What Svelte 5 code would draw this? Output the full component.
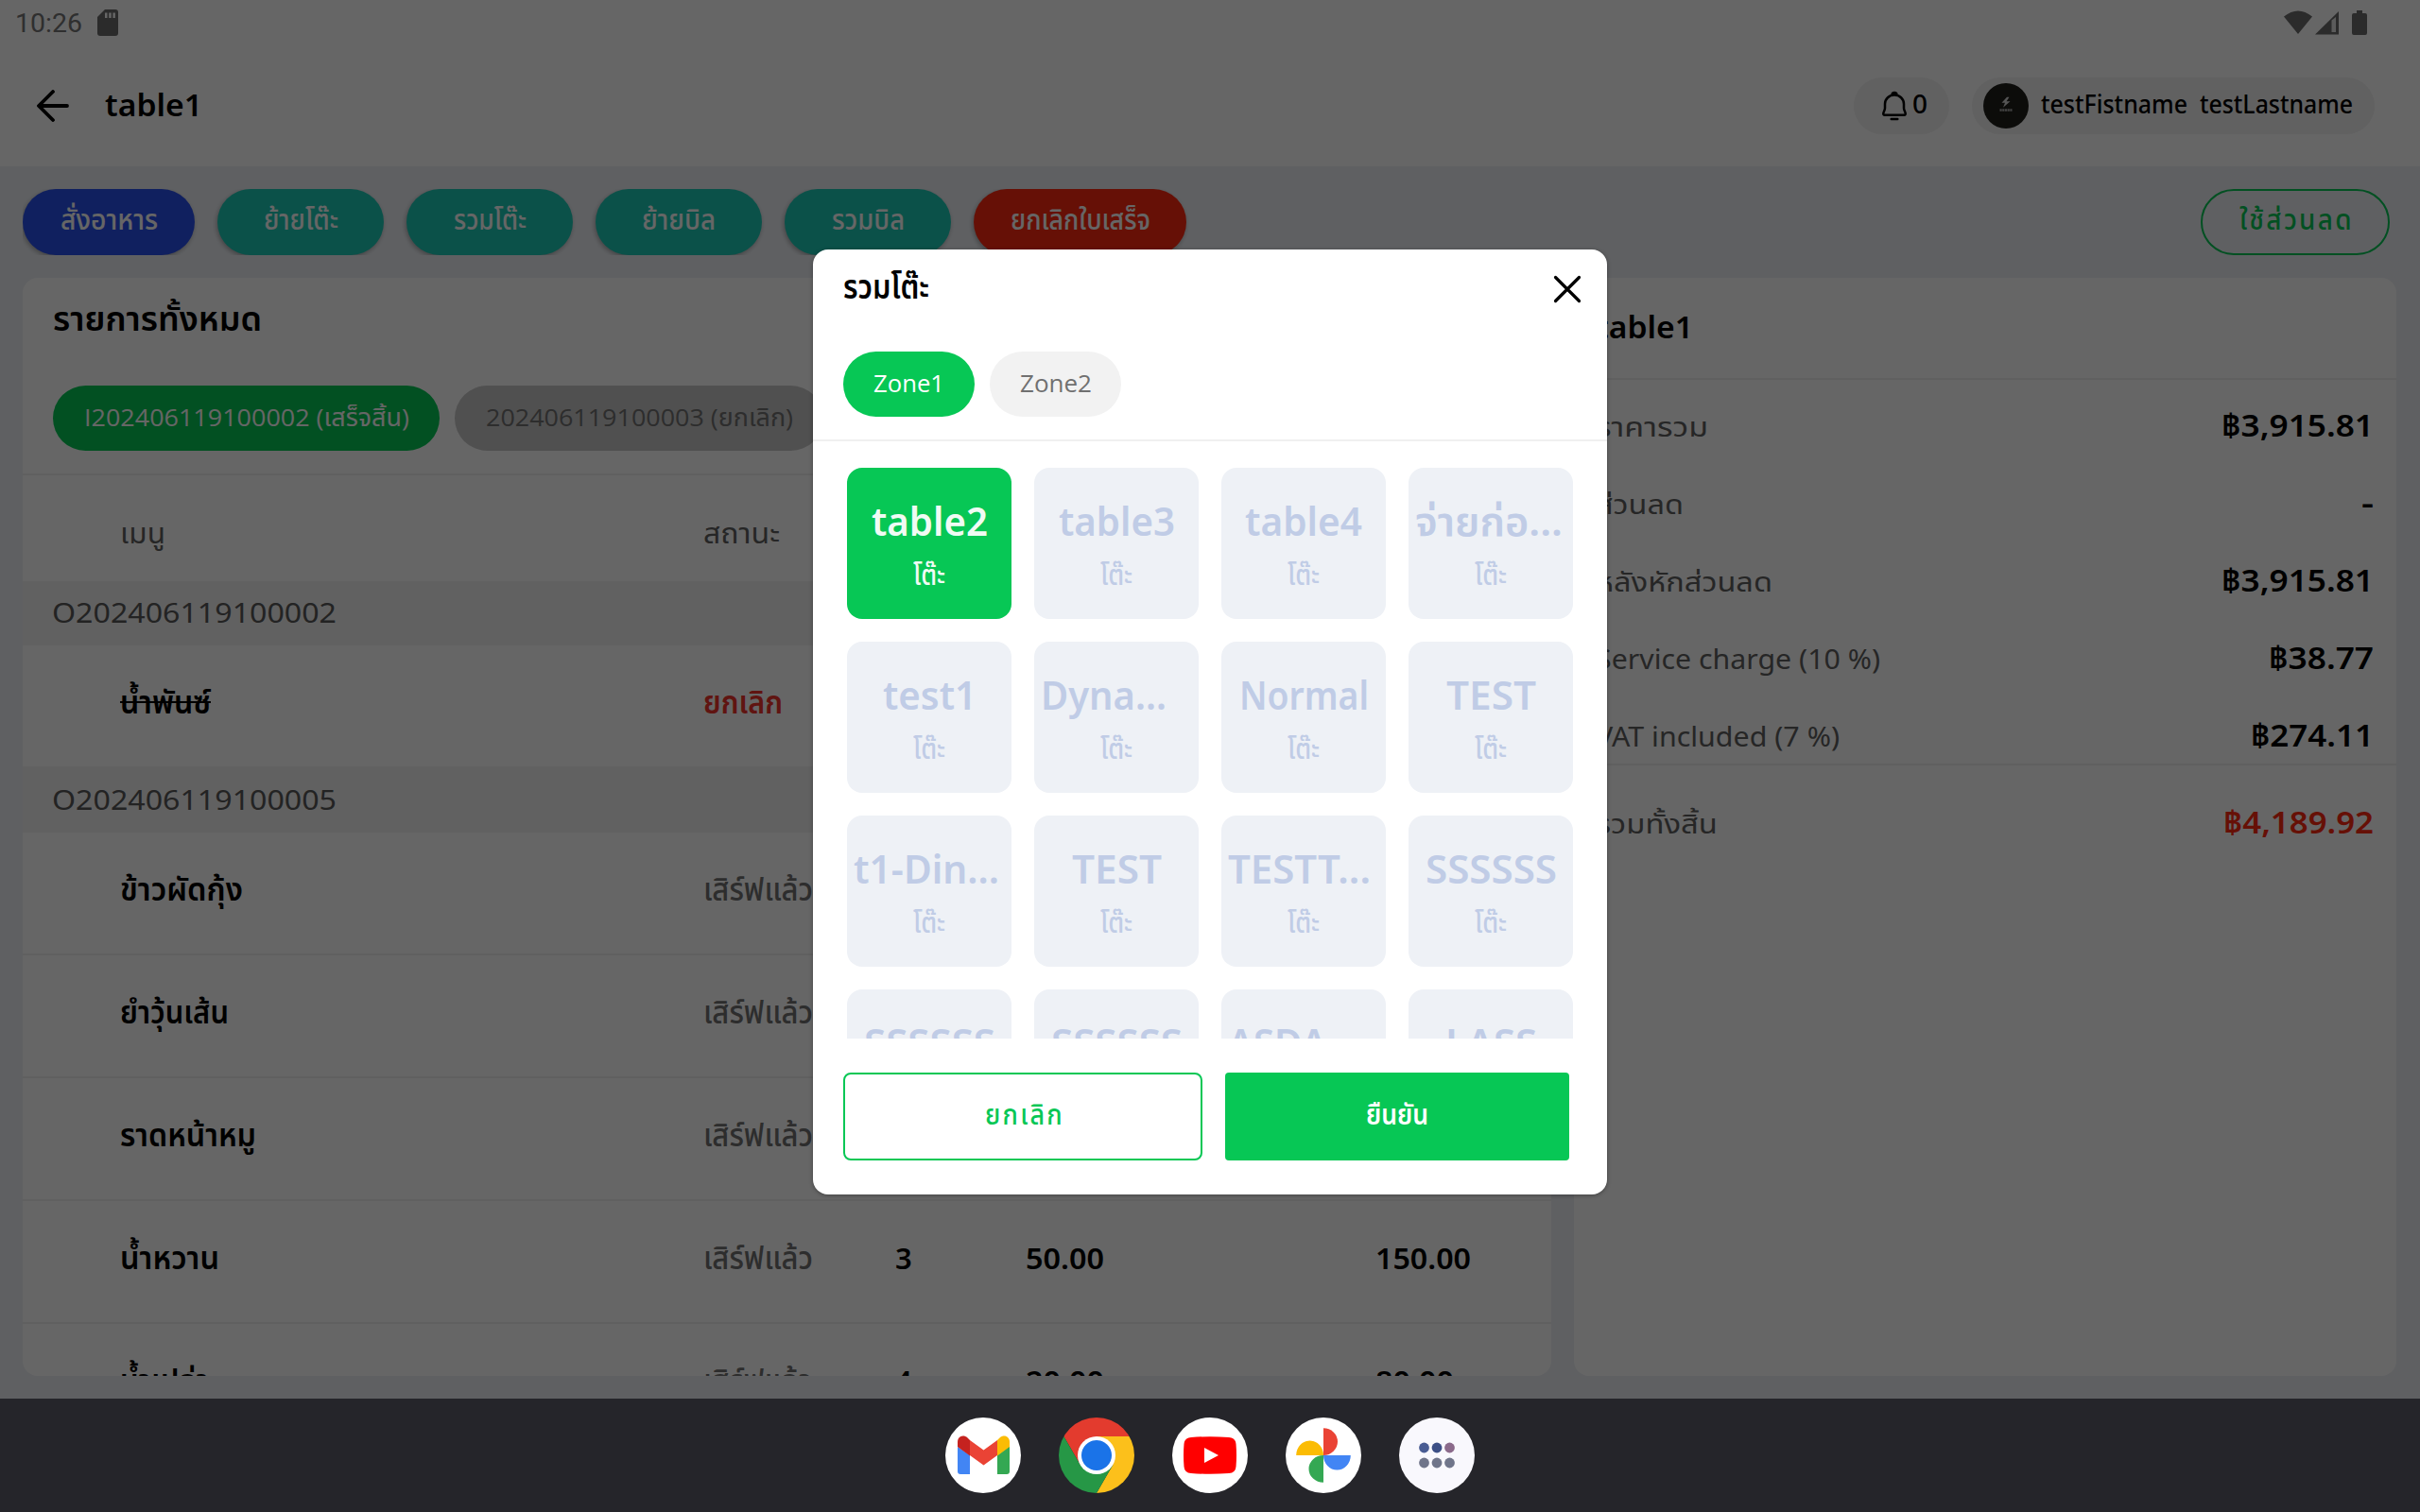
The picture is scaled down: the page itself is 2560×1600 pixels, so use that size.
<script>
  const actions = [
    { label: 'สั่งอาหาร', tone: 'blue', box: 182, w: 101 },
    { label: 'ย้ายโต๊ะ', tone: 'teal', box: 176, w: 77 },
    { label: 'รวมโต๊ะ', tone: 'teal', box: 176, w: 75 },
    { label: 'ย้ายบิล', tone: 'teal', box: 176, w: 76 },
    { label: 'รวมบิล', tone: 'teal', box: 176, w: 75 },
    { label: 'ยกเลิกใบเสร็จ', tone: 'red', box: 225, w: 146 },
  ];

  const served = [
    { name: 'ข้าวผัดกุ้ง', w: 128 },
    { name: 'ยำวุ้นเส้น', w: 113 },
    { name: 'ราดหน้าหมู', w: 142 },
    { name: 'น้ำหวาน', w: 103, qty: '3', price: '50.00', total: '150.00' },
    { name: 'น้ำเปล่า', w: 92, qty: '4', price: '20.00', total: '80.00' },
  ];

  const summary = [
    { label: 'ราคารวม', w: 117, amount: '฿3,915.81', aw: 159 },
    { label: 'ส่วนลด', w: 91, amount: '-', aw: 11 },
    { label: 'หลังหักส่วนลด', w: 185, amount: '฿3,915.81', aw: 159 },
    { label: 'Service charge (10 %)', w: 299, amount: '฿38.77', aw: 109 },
    { label: 'VAT included (7 %)', w: 256, amount: '฿274.11', aw: 128 },
  ];

  const tables = [
    { name: 'table2', w: 121, active: true },
    { name: 'table3', w: 121 },
    { name: 'table4', w: 122 },
    { name: 'จ่ายก่อ...', w: 154, cut: true },
    { name: 'test1', w: 97 },
    { name: 'Dyna...', w: 131, cut: true },
    { name: 'Normal', w: 135 },
    { name: 'TEST', w: 93 },
    { name: 't1-Din...', w: 152, cut: true },
    { name: 'TEST', w: 93 },
    { name: 'TESTT...', w: 149, cut: true },
    { name: 'SSSSSS', w: 137 },
    { name: 'SSSSSS', w: 137 },
    { name: 'SSSSSS', w: 137 },
    { name: 'ASDA ...', w: 146, cut: true },
    { name: 'LASS', w: 95 },
  ];

  // Condenses or widens a label so that its ink occupies the given width,
  // with a pixel of side bearing hanging out at both ends.
  function fit(node, width) {
    const natural = node.getBoundingClientRect().width;
    if (!natural) return;
    const target = width + 2;
    node.style.transform = `scaleX(${target / natural})`;
    node.style.marginRight = `${target - natural - 1}px`;
  }
</script>

<div class="screen">
  <div class="app">
    <div class="status">
      <span class="fit clock" use:fit={69}>10:26</span>
      <svg class="sd" viewBox="0 0 22 28"><path d="M8 0h11a3 3 0 0 1 3 3v22a3 3 0 0 1-3 3H3a3 3 0 0 1-3-3V8z" fill="#6b6b6b" /><path d="M8 3.500h2.500v5.500H8zM12.200 3.500h2.500v5.500h-2.500zM16.400 3.500h2.500v5.500h-2.500z" fill="#fff" /></svg>
      <span class="spacer"></span>
      <svg class="signals" viewBox="0 0 90 28">
        <path d="M0 7.500Q15-4.500 30 7.500L15 26z" fill="#6b6b6b" />
        <path d="M58 2v24.500H33z" fill="#6b6b6b" /><path d="M50.500 11.500L55 8v16h-4.500z" fill="#e4e4e4" />
        <path d="M77 1h6v3h3a2 2 0 0 1 2 2v19a2 2 0 0 1-2 2H74a2 2 0 0 1-2-2V6a2 2 0 0 1 2-2h3z" fill="#6b6b6b" />
      </svg>
    </div>

    <header>
      <svg class="back" viewBox="0 0 34 34" fill="none" stroke="#000" stroke-width="3.800" stroke-linecap="round" stroke-linejoin="round"><path d="M17 2L2 17l15 15M2.500 17H32" /></svg>
      <h1><span class="fit" use:fit={101}>table1</span></h1>
      <span class="spacer"></span>
      <div class="pill bell">
        <svg viewBox="0 0 28 32" fill="none" stroke="#000" stroke-width="2.500" stroke-linejoin="round" stroke-linecap="round"><path d="M14 4.500c-5.500 0-10 4.200-10 9.500v4.500c0 2-1.500 3.500-1.700 5.500-.1 1 .4 1.700 1.200 1.700h21c.8 0 1.300-.7 1.200-1.700-.2-2-1.700-3.500-1.700-5.500V14c0-5.300-4.500-9.500-10-9.500zM11.500 4.500a2.500 2.500 0 0 1 5 0M10.700 30h6.600" /></svg>
        <span class="fit" use:fit={14}>0</span>
      </div>
      <div class="pill user">
        <svg viewBox="0 0 48 48"><circle cx="24" cy="24" r="24" fill="#1f1f1b" /><path d="M25 14.700l-5.500 6h3.500l-2 5 7.500-6.500h-4l3-4.500z" fill="#d5d5d5" /><path d="M17.500 28.500h13" stroke="#a5a5a5" stroke-width="2.600" stroke-dasharray="2.200 .5" /></svg>
        <span class="fit" use:fit={153}>testFistname</span>
        <span class="fit last" use:fit={160}>testLastname</span>
      </div>
    </header>

    <div class="toolbar">
      <div class="actions">
        {#each actions as a}
          <button class="action {a.tone}" style:width="{a.box}px"><span class="fit" use:fit={a.w}>{a.label}</span></button>
        {/each}
      </div>
      <button class="action outline"><span class="fit" use:fit={119}>ใช้ส่วนลด</span></button>
    </div>

    <div class="panels">
      <section class="card orders">
        <h2 class="thai"><span class="fit" use:fit={219}>รายการทั้งหมด</span></h2>
        <div class="chips">
          <span class="chip on bill"><span class="fit" use:fit={342}>I202406119100002 (เสร็จสิ้น)</span></span>
          <span class="chip gray bill2"><span class="fit" use:fit={323}>202406119100003 (ยกเลิก)</span></span>
        </div>
        <div class="row head">
          <span><span class="fit" use:fit={46}>เมนู</span></span>
          <span><span class="fit" use:fit={79}>สถานะ</span></span>
        </div>
        <div class="group"><span class="fit" use:fit={299}>O202406119100002</span></div>
        <div class="row item">
          <span class="name"><span class="fit strike" use:fit={94}>น้ำพันซ์</span></span>
          <span class="cancelled"><span class="fit" use:fit={82}>ยกเลิก</span></span>
        </div>
        <div class="group second"><span class="fit" use:fit={299}>O202406119100005</span></div>
        {#each served as s}
          <div class="row item">
            <span class="name"><span class="fit" use:fit={s.w}>{s.name}</span></span>
            <span class="state"><span class="fit" use:fit={114}>เสิร์ฟแล้ว</span></span>
            {#if s.qty}
              <span class="num">{s.qty}</span>
              <span class="num"><span class="fit" use:fit={81}>{s.price}</span></span>
              <span class="num"><span class="fit" use:fit={s.total.length > 5 ? 99 : 81}>{s.total}</span></span>
            {/if}
          </div>
        {/each}
      </section>

      <section class="card bill-summary">
        <h2><span class="fit" use:fit={101}>table1</span></h2>
        <div class="lines">
          {#each summary as l}
            <div class="line">
              <span class="fit" use:fit={l.w}>{l.label}</span>
              <b><span class="fit" use:fit={l.aw}>{l.amount}</span></b>
            </div>
          {/each}
        </div>
        <div class="line total">
          <span class="fit" use:fit={127}>รวมทั้งสิ้น</span>
          <b><span class="fit" use:fit={157}>฿4,189.92</span></b>
        </div>
      </section>
    </div>
  </div>

  <div class="scrim">
    <div class="modal">
      <div class="modal-head">
        <h3 class="thai"><span class="fit" use:fit={89}>รวมโต๊ะ</span></h3>
        <svg viewBox="0 0 30 30" stroke="#000" stroke-width="3.200" stroke-linecap="round"><path d="M2.500 2.500l25 25M27.500 2.500l-25 25" /></svg>
      </div>
      <div class="zones">
        <span class="chip on"><span class="fit" use:fit={73}>Zone1</span></span>
        <span class="chip off"><span class="fit" use:fit={74}>Zone2</span></span>
      </div>
      <div class="grid">
        {#each tables as t}
          <div class="tile" class:active={t.active}>
            <span class="tname" class:cut={t.cut}><span class="fit" use:fit={t.w}>{t.name}</span></span>
            <span class="kind"><span class="fit" use:fit={32}>โต๊ะ</span></span>
          </div>
        {/each}
      </div>
      <div class="buttons">
        <button class="cancel"><span class="fit" use:fit={82}>ยกเลิก</span></button>
        <button class="confirm"><span class="fit" use:fit={64}>ยืนยัน</span></button>
      </div>
    </div>
  </div>

  <nav>
    <svg viewBox="0 0 80 80">
      <circle cx="40" cy="40" r="40" fill="#fff" />
      <path d="M13 31v26a3 3 0 0 0 3 3h10V40z" fill="#4285f4" />
      <path d="M55 40v20h10a3 3 0 0 0 3-3V30z" fill="#34a853" />
      <path d="M55 24v16.500L68 31v-5c0-6-6-8.500-10.500-4.500z" fill="#fbbc04" />
      <path d="M26 24v16L40.500 50.500 55 40V24L40.500 34.500z" fill="#ea4335" />
      <path d="M13 26v5l13 9.500V24l-2.500-2.500C19 17.500 13 20 13 26z" fill="#c5221f" />
    </svg>
    <svg viewBox="0 0 80 80">
      <defs><clipPath id="disc"><circle cx="40" cy="40" r="40" /></clipPath></defs>
      <g clip-path="url(#disc)">
        <path d="M0 0h80v20H40L22.700 50 5.400 20z" fill="#e33b2e" />
        <path d="M40 20h40v60H40l17.300-30z" fill="#fcc01b" />
        <path d="M5.400 20L22.700 50h34.600L40 80H0V20z" fill="#269746" />
      </g>
      <circle cx="40" cy="40" r="20" fill="#fff" />
      <circle cx="40" cy="40" r="16" fill="#1a73e8" />
    </svg>
    <svg viewBox="0 0 80 80">
      <circle cx="40" cy="40" r="40" fill="#fff" />
      <path d="M20 21q20-1.500 40 0 7 .5 7.500 7 1 12 0 24-.5 6.500-7.500 7-20 1.500-40 0-7-.5-7.500-7-1-12 0-24 .5-6.500 7.500-7z" fill="#f00" />
      <path d="M34 32l15 8-15 8z" fill="#fff" />
    </svg>
    <svg viewBox="0 0 80 80">
      <circle cx="40" cy="40" r="40" fill="#fff" />
      <path d="M40 11.200a15 14.400 0 0 1 0 28.800z" fill="#ea4335" />
      <path d="M40 40H68.800a14.400 15.500 0 0 1-28.800 0z" fill="#4285f4" />
      <path d="M40 40v28.800a15.500 14.400 0 0 1 0-28.800z" fill="#34a853" />
      <path d="M40 40H11.200a14.400 15.500 0 0 1 28.800 0z" fill="#fbbc04" />
    </svg>
    <svg viewBox="0 0 80 80">
      <circle cx="40" cy="40" r="40" fill="#f9f8fd" />
      <g fill="#70758a">
        <circle cx="26.500" cy="32" r="5.400" fill="#495c93" /><circle cx="40" cy="32" r="5.400" fill="#3d4f86" /><circle cx="53.500" cy="32" r="5.400" fill="#8b6a8b" />
        <circle cx="26.500" cy="48" r="5.400" /><circle cx="40" cy="48" r="5.400" /><circle cx="53.500" cy="48" r="5.400" />
      </g>
    </svg>
  </nav>
</div>

<style>
  :global(body) {
    margin: 0;
    overflow: hidden;
  }
  .screen {
    position: relative;
    width: 2560px;
    height: 1600px;
    overflow: hidden;
    font-family: 'Noto Sans', 'Noto Sans Thai', 'Open Sans', sans-serif;
    color: #000;
    display: flex;
    flex-direction: column;
  }
  .app {
    height: 1480px;
    background: #eef1f6;
    display: flex;
    flex-direction: column;
  }
  .screen * {
    box-sizing: border-box;
  }
  .fit {
    display: inline-block;
    white-space: pre;
    transform-origin: left center;
    flex: none;
    margin-left: -1px;
  }
  .spacer {
    flex: 1;
  }
  button {
    font: inherit;
    border: 0;
    padding: 0;
  }
  h1,
  h2,
  h3 {
    margin: 0;
    font-weight: 600;
    font-size: 33px;
    line-height: 40px;
  }
  .thai {
    font-size: 35px;
  }

  .status {
    height: 50px;
    background: #fff;
    display: flex;
    align-items: center;
    padding: 0 54px 2px 17px;
    font: 28px/48px Roboto, sans-serif;
    color: #757575;
  }
  .clock {
    padding-top: 2px;
  }
  .sd {
    width: 22px;
    height: 28px;
    margin-left: 17px;
  }
  .signals {
    width: 90px;
    height: 28px;
  }
  header {
    height: 126px;
    background: #fff;
    display: flex;
    align-items: center;
    padding: 0 48px 2px 39px;
  }
  .back {
    width: 34px;
    height: 34px;
    margin-right: 39px;
  }
  h1 {
    padding-bottom: 2px;
  }
  .pill {
    height: 60px;
    border-radius: 30px;
    background: #f2f2f2;
    display: flex;
    align-items: center;
    font-size: 27px;
    font-weight: 500;
    line-height: 58px;
  }
  .pill .fit {
    padding-bottom: 4px;
  }
  .bell {
    width: 101px;
    padding-left: 29px;
    margin-right: 24px;
    gap: 6px;
  }
  .bell svg {
    width: 28px;
    height: 32px;
  }
  .user {
    width: 426px;
    padding-left: 12px;
  }
  .user svg {
    width: 48px;
    height: 48px;
    margin-right: 14px;
  }
  .user .last {
    margin-left: 14px;
  }

  .toolbar {
    height: 118px;
    display: flex;
    justify-content: space-between;
    padding: 24px 32px 24px 24px;
  }
  .actions {
    display: flex;
    gap: 24px;
    height: 70px;
    padding-right: 8px;
    overflow: hidden;
  }
  .action {
    height: 70px;
    border-radius: 35px;
    color: #fff;
    font-size: 30px;
    font-weight: 500;
    line-height: 63px;
    padding-bottom: 7px;
    box-shadow: -1px 2px 5px rgba(0, 0, 0, 0.3);
  }
  .blue {
    background: #2a50ee;
  }
  .teal {
    background: #1ccbb7;
  }
  .red {
    background: #ff2a10;
  }
  .outline {
    width: 200px;
    border: 2px solid #07c755;
    background: none;
    color: #07c755;
    line-height: 60px;
    padding: 0 0 6px 2px;
    letter-spacing: 2.500px;
    box-shadow: none;
  }

  .panels {
    display: flex;
    gap: 24px;
    padding-left: 24px;
    height: 1162px;
  }
  .card {
    background: #fff;
    border-radius: 16px;
    overflow: hidden;
    height: 1162px;
  }
  .orders {
    width: 1617px;
  }
  .orders h2 {
    padding: 23px 0 0 33px;
    height: 114px;
  }
  .chips {
    display: flex;
    gap: 16px;
    padding: 0 0 0 32px;
    height: 93px;
  }
  .chip {
    height: 69px;
    border-radius: 35px;
    display: flex;
    align-items: center;
    justify-content: center;
    font-family: 'Open Sans', 'Noto Sans', 'Noto Sans Thai', sans-serif;
    font-size: 26px;
    line-height: 65px;
    padding-bottom: 2px;
    flex: none;
  }
  .on {
    background: #07c755;
    color: #fff;
  }
  .gray {
    background: #c8c8c8;
    color: #707070;
  }
  .off {
    background: #f2f2f2;
    color: #707070;
  }
  .bill {
    width: 409px;
  }
  .bill2 {
    width: 390px;
  }
  .row {
    display: grid;
    grid-template-columns: 617px 202px 139px 370px 1fr;
    padding-left: 104px;
    border-top: 2px solid #f0f0f0;
  }
  .head {
    height: 114px;
    font-size: 31px;
    line-height: 40px;
    padding-top: 40px;
    color: #606060;
  }
  .group {
    height: 68px;
    background: #f2f2f2;
    padding-left: 32px;
    font-size: 29px;
    line-height: 65px;
    color: #585858;
  }
  .second {
    height: 70px;
    padding-top: 2px;
  }
  .item {
    height: 130px;
    line-height: 40px;
    padding-top: 40px;
    font-size: 33px;
    font-weight: 600;
  }
  .num {
    font-size: 31px;
  }
  .group + .item {
    height: 128px;
    border-top: 0;
  }
  .strike {
    text-decoration: line-through;
    text-decoration-thickness: 2px;
  }
  .cancelled {
    color: #f0342b;
  }
  .state {
    color: #707070;
    font-weight: 500;
  }
  .bill-summary {
    width: 870px;
    font-size: 29px;
    color: #606060;
  }
  .bill-summary h2 {
    height: 106px;
    padding: 32px 0 0 24px;
    color: #000;
  }
  .lines {
    border: solid #f0f0f0;
    border-width: 2px 0;
    height: 410px;
    padding-top: 27px;
  }
  .line {
    display: flex;
    justify-content: space-between;
    height: 82px;
    line-height: 44px;
    padding: 0 25px 0 24px;
  }
  .line b {
    font-size: 33px;
    font-weight: 600;
    color: #000;
    margin-top: -1px;
  }
  .total {
    padding-top: 39px;
    height: 90px;
  }
  .total b {
    color: #ff2a10;
  }

  .scrim {
    position: absolute;
    inset: 0 0 120px;
    background: rgba(0, 0, 0, 0.6);
    display: flex;
    justify-content: center;
    align-items: flex-start;
    padding-top: 264px;
  }
  .modal {
    width: 840px;
    height: 1000px;
    border-radius: 16px;
    background: #fff;
    box-shadow: 0 1px 4px rgba(0, 0, 0, 0.35);
    overflow: hidden;
  }
  .modal-head {
    height: 108px;
    padding: 19px 27px 0 33px;
    display: flex;
    justify-content: space-between;
    align-items: flex-start;
  }
  .modal-head svg {
    width: 30px;
    height: 30px;
    margin-top: 8px;
  }
  .zones {
    display: flex;
    gap: 16px;
    padding-left: 32px;
    height: 95px;
    border-bottom: 2px solid #f0f0f0;
  }
  .zones .chip {
    width: 139px;
  }
  .grid {
    display: grid;
    grid-template-columns: repeat(4, 174px);
    grid-auto-rows: 160px;
    gap: 24px;
    padding: 28px 36px 0;
    height: 632px;
    overflow: hidden;
  }
  .tile {
    border-radius: 16px;
    background: #eef1f6;
    color: #c0cce6;
    display: flex;
    flex-direction: column;
    align-items: center;
    padding-top: 26px;
  }
  .active {
    background: #07c755;
    color: #f0fbf4;
  }
  .tname {
    font-size: 42px;
    font-weight: 600;
    line-height: 60px;
  }
  .cut {
    align-self: flex-start;
    padding-left: 8px;
  }
  .kind {
    font-size: 30px;
    font-weight: 500;
    line-height: 40px;
    padding-top: 7px;
  }
  .buttons {
    display: flex;
    gap: 24px;
    padding: 36px 0 0 32px;
  }
  .buttons button {
    height: 93px;
    font-size: 30px;
    font-weight: 500;
    line-height: 83px;
    padding-bottom: 6px;
  }
  .buttons .cancel {
    width: 380px;
    border: 2px solid #07c755;
    border-radius: 8px;
    background: #fff;
    color: #07c755;
    padding-left: 3px;
    letter-spacing: 2.500px;
  }
  .buttons .confirm {
    width: 364px;
    border-radius: 4px;
    background: #07c755;
    color: #fff;
    font-weight: 600;
  }

  nav {
    height: 120px;
    background: #25252a;
    display: flex;
    justify-content: center;
    align-items: center;
    gap: 40px;
  }
  nav svg {
    width: 80px;
    height: 80px;
  }
</style>
